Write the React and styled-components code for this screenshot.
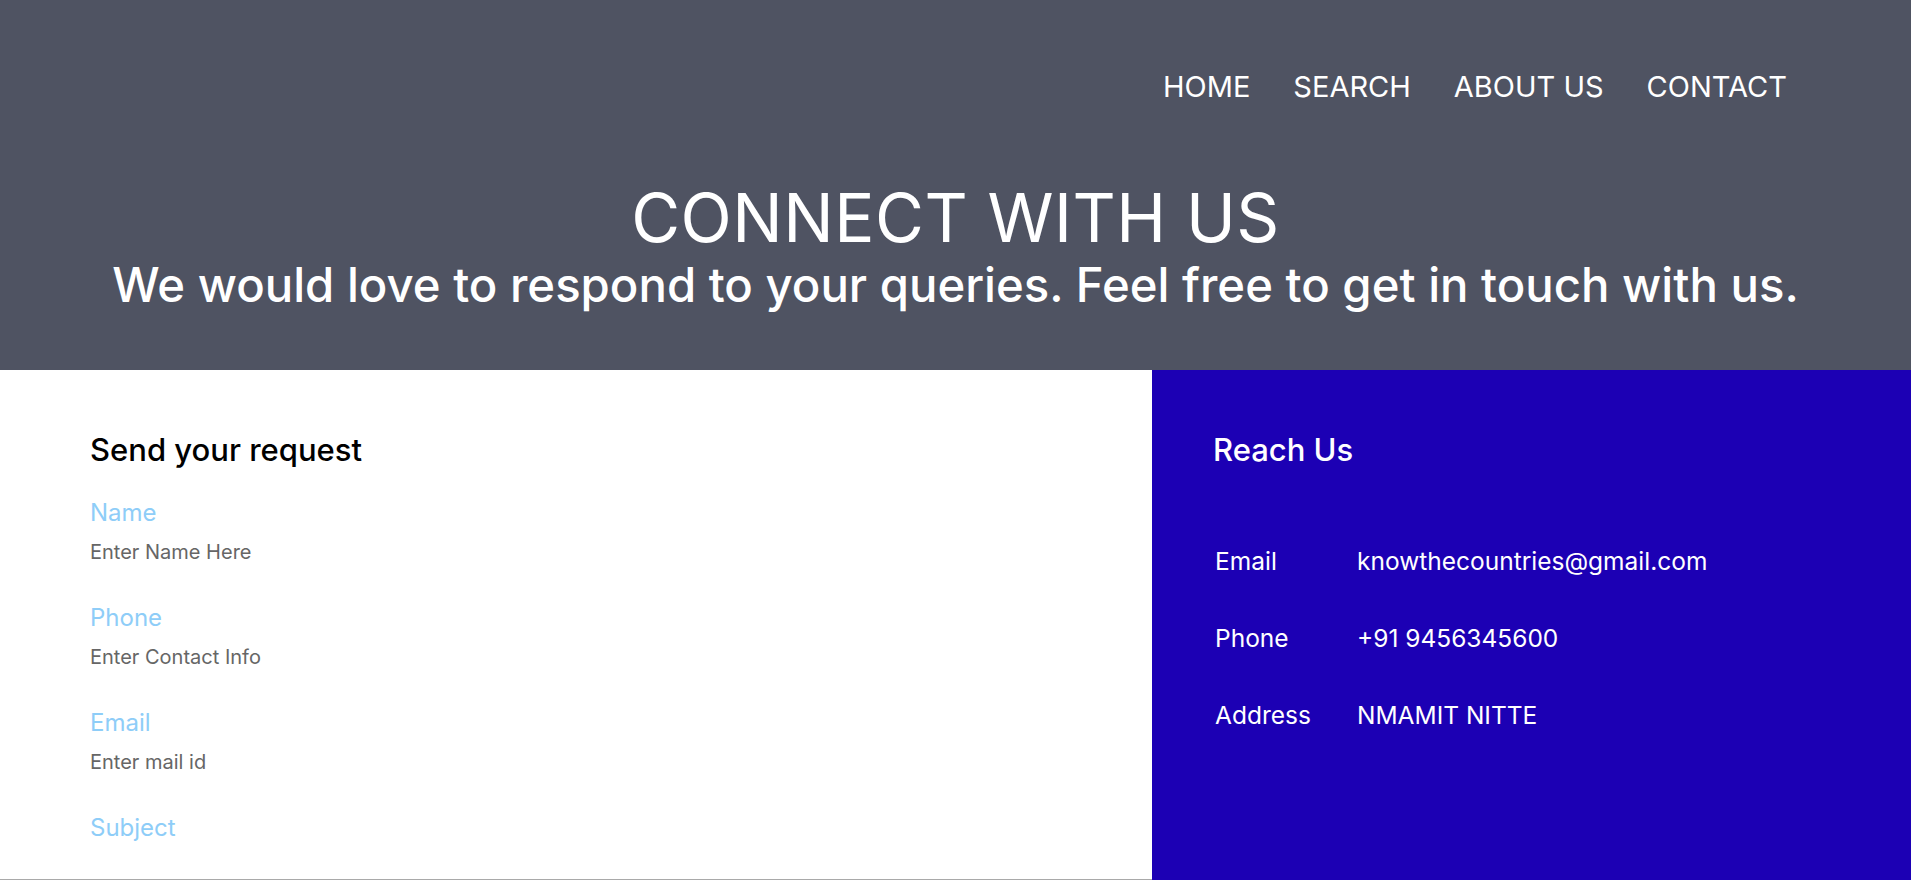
import React from "react";
import styled, { createGlobalStyle } from "styled-components";

const GlobalStyle = createGlobalStyle`
  * { box-sizing: border-box; }
  html, body { margin: 0; padding: 0; }
  body {
    font-family: Inter, "Noto Sans", "Liberation Sans", sans-serif;
    background: #ffffff;
    overflow: hidden;
  }
`;

const Header = styled.header`
  background: #4f5362;
  height: 370px;
  padding-top: 69px;
  color: #ffffff;
`;

const Nav = styled.nav`
  display: flex;
  justify-content: flex-end;
  gap: 43px;
  padding: 0 124px;
`;

const NavLink = styled.a`
  font-size: 29px;
  line-height: 36px;
  color: #ffffff;
  text-decoration: none;
  cursor: pointer;
`;

const Hero = styled.div`
  margin-top: 76px;
  text-align: center;
  white-space: nowrap;
`;

const Title = styled.h1`
  margin: 0;
  font-size: 67px;
  font-weight: 400;
  line-height: 74px;
  letter-spacing: 0.5px;
`;

const Subtitle = styled.p`
  margin: 0;
  font-size: 47.3px;
  font-weight: 500;
  line-height: 60px;
`;

const Main = styled.main`
  display: grid;
  grid-template-columns: 1152px 1fr;
  height: 510px;
`;

const FormPanel = styled.section`
  padding: 62px 0 0 90px;
  border-bottom: 1px solid #a9a9a9;
  overflow: hidden;
`;

const ReachPanel = styled.section`
  background: #1c00b4;
  color: #ffffff;
  padding: 62px 0 0 61px;
`;

const PanelTitle = styled.h2`
  margin: 0;
  font-size: 31px;
  font-weight: 500;
  line-height: 36px;
  color: ${(p) => (p.light ? "#ffffff" : "#000000")};
`;

const Form = styled.form`
  display: flex;
  flex-direction: column;
  gap: 38px;
  margin-top: 30px;
`;

const Field = styled.div`
  display: flex;
  flex-direction: column;
  gap: 12px;
`;

const Label = styled.label`
  font-size: 24px;
  line-height: 29px;
  color: #8ecdf8;
`;

const Input = styled.input`
  border: none;
  outline: none;
  padding: 0;
  width: 500px;
  height: 26px;
  font-family: inherit;
  font-size: 20px;
  color: #333;
  background: transparent;
  &::placeholder { color: #666666; }
`;

const InfoGrid = styled.dl`
  display: grid;
  grid-template-columns: 142px auto;
  row-gap: 47px;
  margin: 78px 0 0 2px;
`;

const InfoTerm = styled.dt`
  font-size: 24.5px;
  line-height: 30px;
`;

const InfoValue = styled.dd`
  margin: 0;
  font-size: 24.5px;
  line-height: 30px;
`;

const fields = [
  { label: "Name", placeholder: "Enter Name Here" },
  { label: "Phone", placeholder: "Enter Contact Info" },
  { label: "Email", placeholder: "Enter mail id" },
  { label: "Subject" },
];

const info = [
  ["Email", "knowthecountries@gmail.com"],
  ["Phone", "+91 9456345600"],
  ["Address", "NMAMIT NITTE"],
];

export default function App() {
  return (
    <>
      <GlobalStyle />
      <Header>
        <Nav>
          <NavLink>HOME</NavLink>
          <NavLink>SEARCH</NavLink>
          <NavLink>ABOUT US</NavLink>
          <NavLink>CONTACT</NavLink>
        </Nav>
        <Hero>
          <Title>CONNECT WITH US</Title>
          <Subtitle>We would love to respond to your queries. Feel free to get in touch with us.</Subtitle>
        </Hero>
      </Header>
      <Main>
        <FormPanel>
          <PanelTitle>Send your request</PanelTitle>
          <Form>
            {fields.map((f) => (
              <Field key={f.label}>
                <Label>{f.label}</Label>
                {f.placeholder && <Input placeholder={f.placeholder} />}
              </Field>
            ))}
          </Form>
        </FormPanel>
        <ReachPanel>
          <PanelTitle light>Reach Us</PanelTitle>
          <InfoGrid>
            {info.map(([k, v]) => (
              <React.Fragment key={k}>
                <InfoTerm>{k}</InfoTerm>
                <InfoValue>{v}</InfoValue>
              </React.Fragment>
            ))}
          </InfoGrid>
        </ReachPanel>
      </Main>
    </>
  );
}
